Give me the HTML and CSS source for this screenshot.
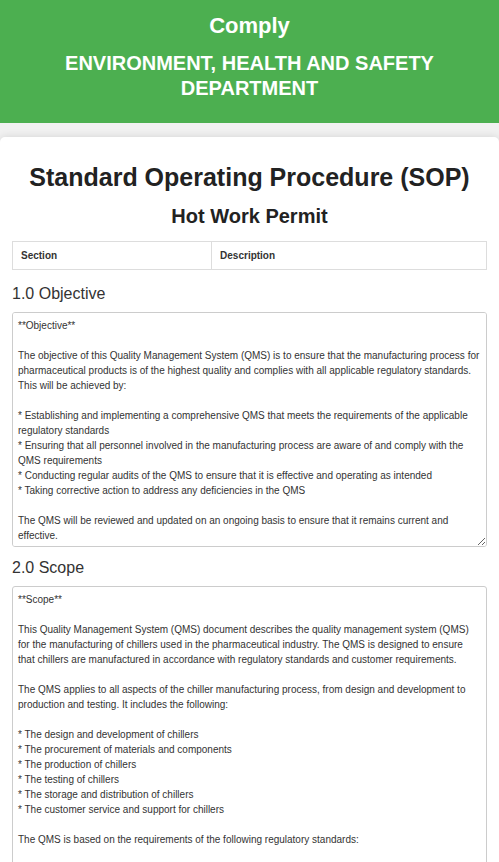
FILE: index.html
```html
<!DOCTYPE html>
<html>
<head>
<meta charset="utf-8">
<title>Comply - SOP</title>
<link rel="stylesheet" href="styles.css">
</head>
<body>
<header class="site-header">
  <div class="brand">Comply</div>
  <div class="dept">ENVIRONMENT, HEALTH AND SAFETY DEPARTMENT</div>
</header>
<main class="card">
  <h1 class="doc-title">Standard Operating Procedure (SOP)</h1>
  <h2 class="doc-subtitle">Hot Work Permit</h2>
  <table class="sop-table">
    <thead>
      <tr><th class="col-section">Section</th><th>Description</th></tr>
    </thead>
  </table>
  <section class="sop-section">
    <h3 class="section-title">1.0 Objective</h3>
    <textarea class="section-text" style="height:235px">**Objective**

The objective of this Quality Management System (QMS) is to ensure that the manufacturing process for pharmaceutical products is of the highest quality and complies with all applicable regulatory standards. This will be achieved by:

* Establishing and implementing a comprehensive QMS that meets the requirements of the applicable regulatory standards
* Ensuring that all personnel involved in the manufacturing process are aware of and comply with the QMS requirements
* Conducting regular audits of the QMS to ensure that it is effective and operating as intended
* Taking corrective action to address any deficiencies in the QMS

The QMS will be reviewed and updated on an ongoing basis to ensure that it remains current and effective.</textarea>
  </section>
  <section class="sop-section">
    <h3 class="section-title">2.0 Scope</h3>
    <textarea class="section-text" style="height:400px">**Scope**

This Quality Management System (QMS) document describes the quality management system (QMS) for the manufacturing of chillers used in the pharmaceutical industry. The QMS is designed to ensure that chillers are manufactured in accordance with regulatory standards and customer requirements.

The QMS applies to all aspects of the chiller manufacturing process, from design and development to production and testing. It includes the following:

* The design and development of chillers
* The procurement of materials and components
* The production of chillers
* The testing of chillers
* The storage and distribution of chillers
* The customer service and support for chillers

The QMS is based on the requirements of the following regulatory standards:

* ISO 9001:2015
* ISO 13485:2016</textarea>
  </section>
</main>
</body>
</html>
```
FILE: styles.css
```css
* { box-sizing: border-box; }
html, body {
  margin: 0;
  padding: 0;
  background: #f1f1f1;
  font-family: "Liberation Sans", Arial, sans-serif;
  color: #333;
}
.site-header {
  background: #4caf50;
  color: #fff;
  text-align: center;
  padding: 13px 20px 22px;
}
.brand {
  font-size: 22px;
  font-weight: bold;
  line-height: 26px;
}
.dept {
  margin-top: 12px;
  font-size: 20px;
  font-weight: bold;
  line-height: 25px;
}
.card {
  background: #fff;
  margin-top: 14px;
  border-radius: 5px;
  box-shadow: 0 0 8px rgba(0,0,0,0.12);
  padding: 20px 12px 12px;
}
.doc-title {
  margin: 4px 0 0;
  text-align: center;
  font-size: 25px;
  line-height: 32px;
  color: #222;
}
.doc-subtitle {
  margin: 10px 0 0;
  text-align: center;
  font-size: 20px;
  line-height: 26px;
  color: #222;
}
.sop-table {
  width: 100%;
  border-collapse: collapse;
  margin-top: 12px;
  margin-bottom: 14px;
}
.sop-table th {
  border: 1px solid #ddd;
  text-align: left;
  font-size: 10px;
  padding: 8px 8px;
  height: 28px;
  color: #333;
}
.col-section { width: 42%; }
.sop-section { margin-top: 11px; }
.section-title {
  margin: 0 0 8px;
  font-size: 16px;
  font-weight: normal;
  line-height: 20px;
  color: #333;
}
.section-text {
  display: block;
  width: 100%;
  border: 1px solid #ccc;
  border-radius: 3px;
  padding: 5px 5px;
  font-family: "Liberation Sans", Arial, sans-serif;
  font-size: 10px;
  line-height: 15px;
  color: #333;
  resize: vertical;
  overflow: auto;
}
```
